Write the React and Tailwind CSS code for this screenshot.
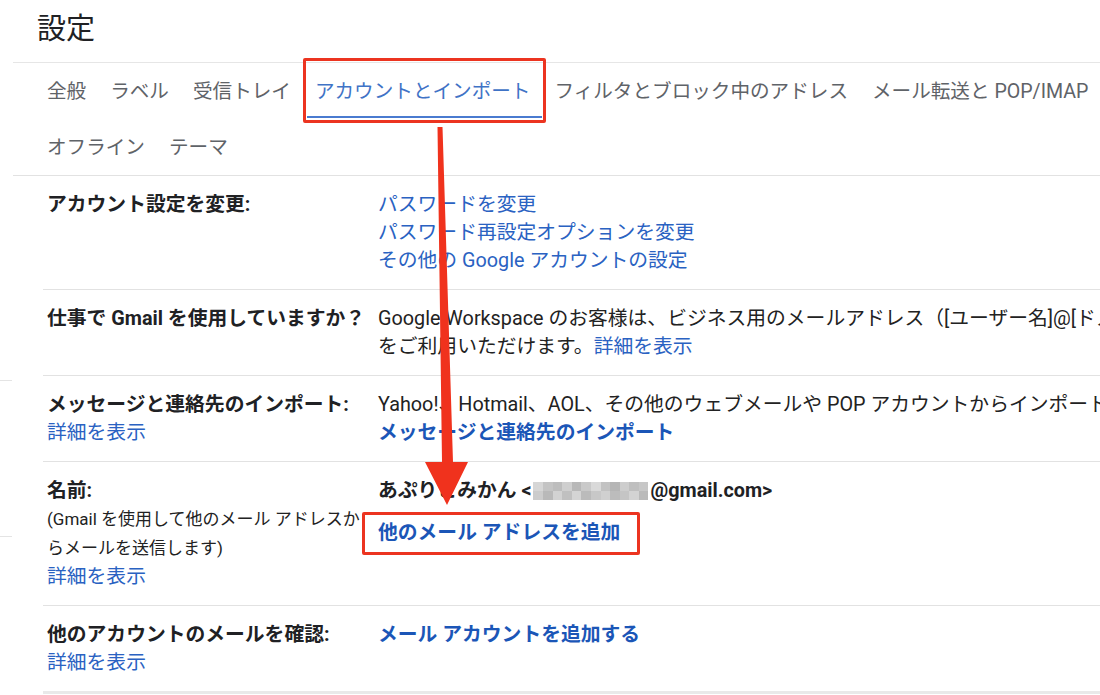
import React from 'react';

const tabsTop = ['全般', 'ラベル', '受信トレイ', 'アカウントとインポート', 'フィルタとブロック中のアドレス', 'メール転送と POP/IMAP'];
const tabsBottom = ['オフライン', 'テーマ'];

const blurShades = [
    '#d6d6d6', '#c4c4c4', '#bdbdbd', '#cfcfcf', '#b8b8b8', '#c9c9c9', '#d9d9d9', '#c2c2c2', '#b5b5b5', '#cdcdcd', '#bfbfbf', '#c7c7c7',
    '#cccccc', '#b9b9b9', '#d2d2d2', '#c0c0c0', '#d4d4d4', '#bbbbbb', '#c8c8c8', '#d0d0d0', '#bcbcbc', '#c5c5c5', '#d3d3d3', '#bababa',
];

const Tab = ({ label, active }) => (
    <div className={`relative h-[56px] flex items-center pt-[2px] px-[12px] text-[19.6px] leading-[28px] ${active ? 'text-[#3f73c6]' : 'text-[#5f6368]'}`}>
        {label}
        {active && (
            <>
                <span className="absolute left-[4px] right-0 bottom-[1px] h-[2px] bg-[#4a7bd0]"></span>
                <span className="absolute left-0 -right-[4px] -top-[5px] -bottom-[4px] border-[3px] border-[#ec3420] rounded-[2px]"></span>
            </>
        )}
    </div>
);

const Row = ({ label, children, last }) => (
    <div className={`flex pt-[15px] pb-[14px] leading-[28px] ${last ? 'border-b-[3px] border-[#e9e9e9]' : 'border-b border-[#e2e2e2]'}`}>
        <div className="w-[335px] shrink-0 pl-[4px]">{label}</div>
        <div className="flex-1 whitespace-nowrap">{children}</div>
    </div>
);

const Label = ({ children }) => <div className="font-bold text-[#202124]">{children}</div>;
const Link = ({ children, bold }) => (
    <div className={bold ? 'font-bold text-[#1b56b7]' : 'text-[#2a62c2]'}>{children}</div>
);

export default function App() {
    return (
        <div className="relative w-[1100px] h-[695px] overflow-hidden bg-white text-[19.8px] text-[#222] font-['Roboto','Noto_Sans_CJK_JP',sans-serif]">
            <h1 className="pl-[37px] pt-[10px] h-[62px] text-[29px] leading-[38px] text-[#202124]">設定</h1>

            <div className="ml-[13px] border-t border-[#e6e6e6]">
                <div className="flex pl-[22px] whitespace-nowrap">
                    {tabsTop.map((t) => (
                        <Tab key={t} label={t} active={t === 'アカウントとインポート'} />
                    ))}
                </div>
                <div className="flex pl-[22px]">
                    {tabsBottom.map((t) => (
                        <Tab key={t} label={t} />
                    ))}
                </div>
            </div>

            <div className="ml-[13px] border-t border-[#e2e2e2]">
                <div className="ml-[30px]">
                    <Row label={<Label>アカウント設定を変更:</Label>}>
                        <Link>パスワードを変更</Link>
                        <Link>パスワード再設定オプションを変更</Link>
                        <Link>その他の Google アカウントの設定</Link>
                    </Row>

                    <Row label={<Label>仕事で Gmail を使用していますか？</Label>}>
                        <div>Google Workspace のお客様は、ビジネス用のメールアドレス（[ユーザー名]@[ドメイン名]）</div>
                        <div>
                            をご利用いただけます。<span className="text-[#2a62c2]">詳細を表示</span>
                        </div>
                    </Row>

                    <Row
                        label={
                            <>
                                <Label>メッセージと連絡先のインポート:</Label>
                                <Link>詳細を表示</Link>
                            </>
                        }
                    >
                        <div>Yahoo!、Hotmail、AOL、その他のウェブメールや POP アカウントからインポートします。</div>
                        <Link bold>メッセージと連絡先のインポート</Link>
                    </Row>

                    <Row
                        label={
                            <>
                                <Label>名前:</Label>
                                <div className="text-[17px] leading-[29px] whitespace-nowrap">(Gmail を使用して他のメール アドレスか</div>
                                <div className="text-[17px] leading-[29px]">らメールを送信します)</div>
                                <Link>詳細を表示</Link>
                            </>
                        }
                    >
                        <div className="font-bold text-[#202124] flex items-center">
                            <span>あぷりとみかん &lt;</span>
                            <span className="inline-grid grid-cols-12 w-[115px] h-[18px] mx-[2px]">
                                {blurShades.map((c, i) => (
                                    <span key={i} style={{ backgroundColor: c }}></span>
                                ))}
                            </span>
                            <span>@gmail.com&gt;</span>
                        </div>
                        <div className="mt-[14px] inline-block relative">
                            <Link bold>他のメール アドレスを追加</Link>
                            <span className="absolute -left-[16px] -right-[20px] -top-[7px] -bottom-[8px] border-[3px] border-[#ec3420] rounded-[2px]"></span>
                        </div>
                    </Row>

                    <Row
                        last
                        label={
                            <>
                                <Label>他のアカウントのメールを確認:</Label>
                                <Link>詳細を表示</Link>
                            </>
                        }
                    >
                        <Link bold>メール アカウントを追加する</Link>
                    </Row>
                </div>
            </div>

            <span className="absolute left-0 top-[380px] w-[12px] h-px bg-[#e4e4e4]"></span>
            <span className="absolute left-0 top-[536px] w-[12px] h-px bg-[#e4e4e4]"></span>

            <svg className="absolute inset-0 pointer-events-none" width="1100" height="695" viewBox="0 0 1100 695">
                <polygon
                    points="437.5,127 442.5,127 453,462 468,462 447,505 425,462 442,462"
                    fill="#f0321d"
                />
            </svg>
        </div>
    );
}
